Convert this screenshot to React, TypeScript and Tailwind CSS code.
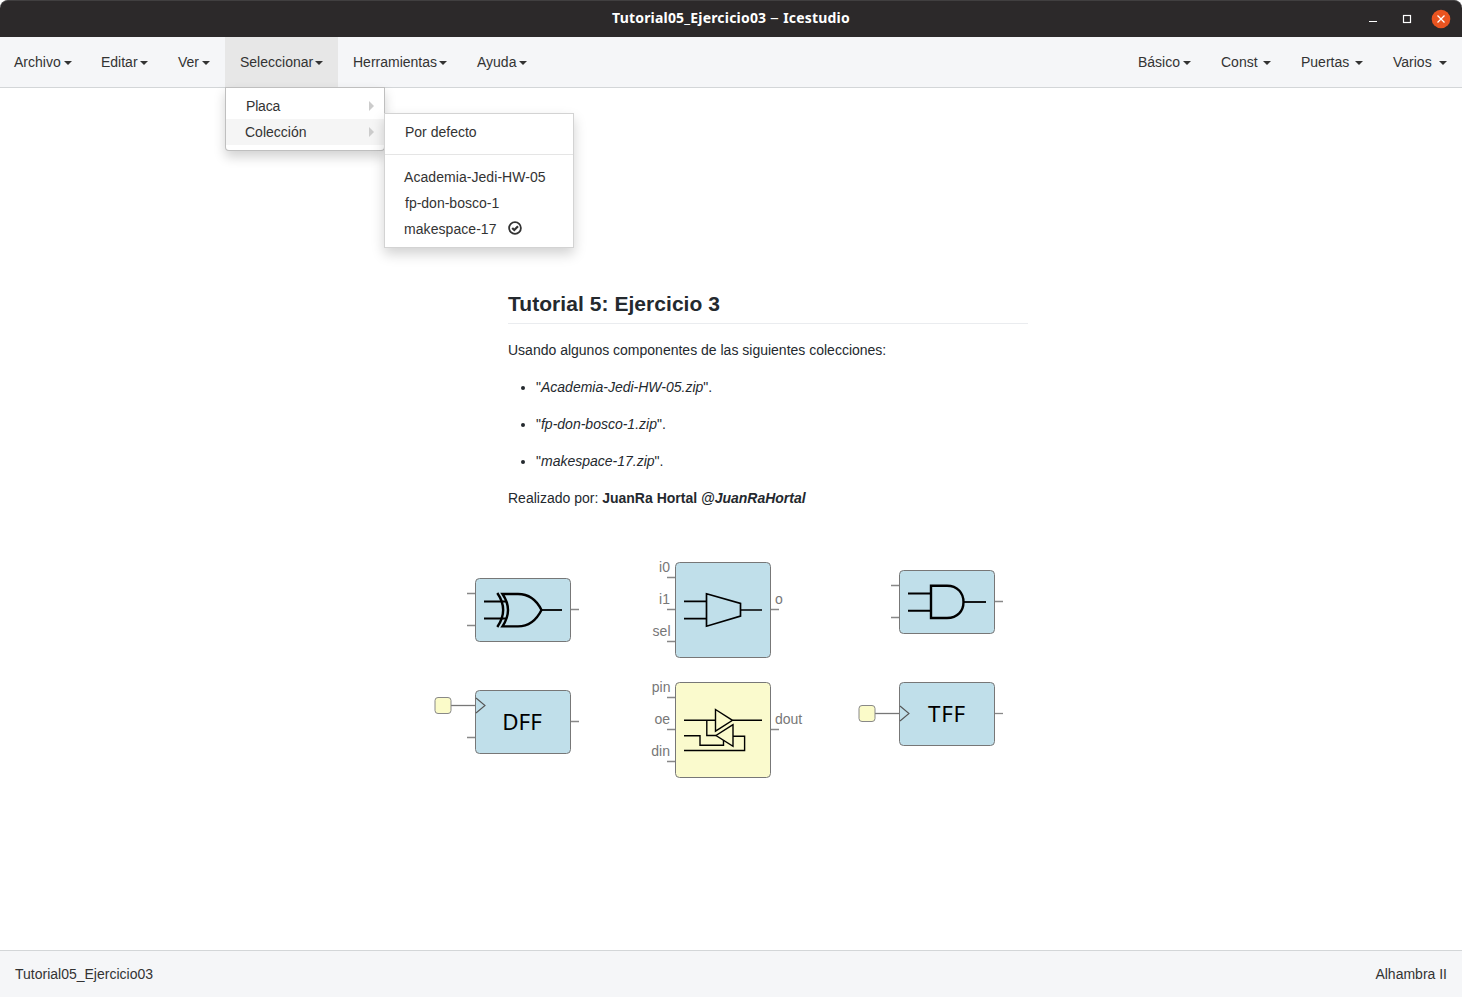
import type { ReactNode } from "react";

function Caret() {
  return (
    <span className="mt-px h-0 w-0 shrink-0 border-x-4 border-t-4 border-x-transparent border-t-[#333]" />
  );
}

function MenuItem({ label, className, children }: { label: string; className: string; children?: ReactNode }) {
  return (
    <li className={`relative flex h-[50px] items-center justify-between px-[15px] whitespace-nowrap ${className}`}>
      <span>{label}</span>
      <Caret />
      {children}
    </li>
  );
}

function SubmenuArrow() {
  return <span className="h-0 w-0 border-y-5 border-l-5 border-y-transparent border-l-[#ccc]" />;
}

function SelectMenu() {
  return (
    <div className="absolute top-[50px] left-0 z-10 w-40 rounded-b border border-black/25 bg-white py-[5px] shadow-[0_6px_12px_rgba(0,0,0,0.18)]">
      <div className="flex h-[26px] items-center justify-between pr-[10px] pl-5">
        <span className="tracking-[-0.2px]">Placa</span>
        <SubmenuArrow />
      </div>
      <div className="flex h-[26px] items-center justify-between bg-[#f5f5f5] pr-[10px] pl-[19px]">
        <span>Colección</span>
        <SubmenuArrow />
      </div>
      <div className="absolute top-[25px] left-[158px] w-[190px] border border-[#d3d3d3] bg-white py-[5px] shadow-[0_6px_12px_rgba(0,0,0,0.18)]">
        <div className="flex h-[26px] items-center pl-5">Por defecto</div>
        <div className="my-[9px] h-px bg-[#e5e5e5]" />
        <div className="flex h-[26px] items-center pl-[19px] tracking-[0.06px]">Academia-Jedi-HW-05</div>
        <div className="flex h-[26px] items-center pl-5">fp-don-bosco-1</div>
        <div className="flex h-[26px] items-center pl-[19px]">
          <span className="w-[104px] tracking-[0.06px]">makespace-17</span>
          <svg width="14" height="14" viewBox="0 0 14 14" className="-mt-[2px]" fill="none" stroke="#333">
            <circle cx="7" cy="7" r="5.9" strokeWidth="1.8" />
            <path d="M4.2 7 L6.3 9 L10 5.3" strokeWidth="2.2" />
          </svg>
        </div>
      </div>
    </div>
  );
}

function TitleBar() {
  return (
    <header className="relative flex h-[37px] shrink-0 items-center justify-center rounded-t-lg border-t border-[#413f40] bg-[#2c292a]">
      <h1 className="-mt-[2px] font-['Noto_Sans',sans-serif] text-[14px] font-bold tracking-[0.19px] text-white">
        Tutorial05_Ejercicio03{" "}
        <span className="inline-block origin-center scale-x-125 px-px font-normal">–</span> Icestudio
      </h1>
      <div className="absolute top-[7px] right-[11px] flex items-center">
        <svg width="83" height="22" viewBox="0 0 83 22" fill="none" stroke="#fff">
          <path d="M1 13.5h8" />
          <rect x="35.5" y="7.5" width="7" height="7" strokeWidth="1.2" />
          <circle cx="73" cy="11" r="9.3" fill="#e95420" stroke="none" />
          <path d="M69.5 7.5l7 7M76.5 7.5l-7 7" strokeWidth="1.3" />
        </svg>
      </div>
    </header>
  );
}

function Block({ x, y, h, fill = "#c0dfea", children }: { x: number; y: number; h: number; fill?: string; children: ReactNode }) {
  return (
    <g transform={`translate(${x} ${y})`}>
      <rect x="0.5" y="0.5" width="95" height={h - 1} rx="4" fill={fill} stroke="#777" />
      {children}
    </g>
  );
}

function Clock({ y }: { y: number }) {
  return (
    <g stroke="#777" fill="none">
      <path d={`M-24 ${y + 0.5}H0`} strokeWidth="1.3" />
      <rect x="-40" y={y - 7.5} width="16" height="16" rx="3" fill="#fbfbc9" stroke="#888" />
      <path d={`M1 ${y - 7}L10 ${y + 0.5}L1 ${y + 8}`} stroke="#555" strokeWidth="1.1" />
    </g>
  );
}

function Diagram() {
  return (
    <svg className="absolute top-[462px] left-[425px]" width="600" height="240" viewBox="425 550 600 240" fontFamily="Liberation Sans, Arial, sans-serif">
      <Block x={475} y={578} h={64}>
        <path d="M-8 15.5H0M-8 47.5H0M96 31.5h8" stroke="#888" strokeWidth="1.3" />
        <g fill="none" stroke="#000" strokeWidth="2.4">
          <path d="M9 23.5H32M9 40.6H32" strokeWidth="2" />
          <path d="M66 32H87" strokeWidth="1.8" />
          <path d="M22.3 15Q34 32 22.3 49" />
          <path d="M27.5 16H43C54 16 62 23 66.5 32C62 41 54 48.4 43 48.4H27.5Q38.5 32 27.5 16Z" />
        </g>
      </Block>

      <Block x={675} y={562} h={96}>
        <path d="M-8 15.5H0M-8 47.5H0M-8 79.5H0M96 47.5h8" stroke="#888" strokeWidth="1.3" />
        <g fill="#777" fontSize="14">
          <text x="-5" y="10" textAnchor="end">i0</text>
          <text x="-5" y="42" textAnchor="end">i1</text>
          <text x="-4.5" y="74" textAnchor="end">sel</text>
          <text x="100" y="42">o</text>
        </g>
        <g fill="none" stroke="#000" strokeWidth="1.7">
          <path d="M9 39.3H31.5M9 56.6H31.5M65.5 48H87" />
          <path d="M31.5 31.8L65.5 41.5V54L31.5 64.2Z" />
        </g>
      </Block>

      <Block x={899} y={570} h={64}>
        <path d="M-8 15.5H0M-8 47.5H0M96 31.5h8" stroke="#888" strokeWidth="1.3" />
        <g fill="none" stroke="#000" strokeWidth="2.4">
          <path d="M9 23.5H32M9 40.7H32" strokeWidth="1.9" />
          <path d="M64 32H87" strokeWidth="1.8" />
          <path d="M32 15.7H48C58.5 15.7 64.5 23 64.5 32C64.5 41 58.5 48 48 48H32Z" />
        </g>
      </Block>

      <Block x={475} y={690} h={64}>
        <Clock y={15} />
        <path d="M-8 47.5H0M96 31.5h8" stroke="#888" strokeWidth="1.3" />
        <text x="47" y="40" textAnchor="middle" fontFamily="Noto Sans, sans-serif" fontSize="22.4">DFF</text>
      </Block>

      <Block x={675} y={682} h={96} fill="#fafacd">
        <path d="M-8 15.5H0M-8 47.5H0M-8 79.5H0M96 47.5h8" stroke="#888" strokeWidth="1.3" />
        <g fill="#777" fontSize="14">
          <text x="-4.5" y="10" textAnchor="end">pin</text>
          <text x="-5" y="42" textAnchor="end">oe</text>
          <text x="-5" y="74" textAnchor="end">din</text>
          <text x="100" y="42">dout</text>
        </g>
        <g fill="none" stroke="#000" strokeWidth="1.4">
          <path d="M9 38.3H40.5M57.5 38.3H87M31.8 38.3V53.5H41" />
          <path d="M40.5 27.5L57.5 38.3L40.5 49.2Z" />
          <path d="M58 42.7L41 53.5L58 64.3Z" />
          <path d="M58 54.3H69.6V68.5H9M9 53.8H25V63.2H48.5V58" />
        </g>
      </Block>

      <Block x={899} y={682} h={64}>
        <Clock y={31} />
        <path d="M96 31.5h8" stroke="#888" strokeWidth="1.3" />
        <text x="48" y="40" textAnchor="middle" fontFamily="Noto Sans, sans-serif" fontSize="22.4" letterSpacing="0.8">TFF</text>
      </Block>
    </svg>
  );
}

export default function App() {
  return (
    <div className="flex h-[997px] w-[1462px] flex-col overflow-hidden bg-white font-['Liberation_Sans',Arial,sans-serif] text-[14px] leading-5 text-[#333]">
      <TitleBar />
      <nav className="flex h-[51px] shrink-0 justify-between border-b border-[#d3d6d8] bg-[#f5f6f8]">
        <ul className="flex">
          <MenuItem label="Archivo" className="w-[87px] pl-[14px]" />
          <MenuItem label="Editar" className="w-[76px] pl-[14px]" />
          <MenuItem label="Ver" className="w-[62px]" />
          <MenuItem label="Seleccionar" className="w-[113px] bg-[#e7e7e7]">
            <SelectMenu />
          </MenuItem>
          <MenuItem label="Herramientas" className="w-[124px]" />
          <MenuItem label="Ayuda" className="w-[80px]" />
        </ul>
        <ul className="flex">
          <MenuItem label="Básico" className="w-[83px]" />
          <MenuItem label="Const" className="w-[80px]" />
          <MenuItem label="Puertas" className="w-[92px]" />
          <MenuItem label="Varios" className="w-[84px]" />
        </ul>
      </nav>
      <main className="relative flex-1 pt-[202px] pl-[508px]">
        <article className="w-[520px] text-[#24292e]">
          <h2 className="h-[34px] border-b border-[#eaecef] text-[21px] leading-7 font-bold tracking-[0.05px]">
            Tutorial 5: Ejercicio 3
          </h2>
          <p className="mt-4 leading-[21px]">Usando algunos componentes de las siguientes colecciones:</p>
          <ul className="mt-4 flex list-disc flex-col gap-4 pl-7 leading-[21px]">
            <li>"<em>Academia-Jedi-HW-05.zip</em>".</li>
            <li>"<em>fp-don-bosco-1.zip</em>".</li>
            <li>"<em>makespace-17.zip</em>".</li>
          </ul>
          <p className="mt-4 leading-[21px]">
            Realizado por: <strong>JuanRa Hortal <em>@JuanRaHortal</em></strong>
          </p>
        </article>
        <Diagram />
      </main>
      <footer className="flex h-[47px] shrink-0 items-center justify-between border-t border-[#d3d6d8] bg-[#f5f6f8] px-[15px]">
        <span>Tutorial05_Ejercicio03</span>
        <span>Alhambra II</span>
      </footer>
    </div>
  );
}
